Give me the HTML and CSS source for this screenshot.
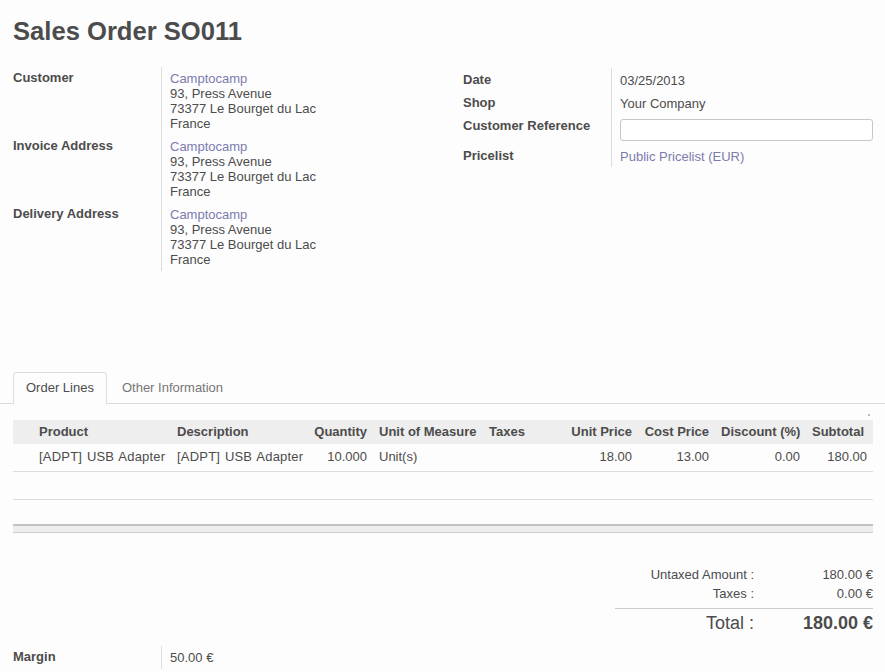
FILE: index.html
```html
<!DOCTYPE html>
<html>
<head>
<meta charset="utf-8">
<link rel="stylesheet" href="styles.css">
</head>
<body>
<div class="page">
  <div class="wrap">
    <h1 class="title">Sales Order SO011</h1>
    <div class="info">
      <div class="group">
        <div class="lbl">Customer</div>
        <div class="val"><a class="link">Camptocamp</a><br>93, Press Avenue<br>73377 Le Bourget du Lac<br>France</div>
        <div class="lbl">Invoice Address</div>
        <div class="val"><a class="link">Camptocamp</a><br>93, Press Avenue<br>73377 Le Bourget du Lac<br>France</div>
        <div class="lbl">Delivery Address</div>
        <div class="val"><a class="link">Camptocamp</a><br>93, Press Avenue<br>73377 Le Bourget du Lac<br>France</div>
      </div>
      <div class="group group-right">
        <div class="lbl">Date</div>
        <div class="val">03/25/2013</div>
        <div class="lbl">Shop</div>
        <div class="val">Your Company</div>
        <div class="lbl">Customer Reference</div>
        <div class="val val-input"><input class="field" type="text"></div>
        <div class="lbl">Pricelist</div>
        <div class="val"><a class="link">Public Pricelist (EUR)</a></div>
      </div>
    </div>
  </div>

  <div class="tabbar">
    <div class="tab active">Order Lines</div>
    <div class="tab">Other Information</div>
  </div>

  <div class="wrap">
    <div class="dotrow"><span class="dot"></span></div>
    <table class="lines">
      <colgroup>
        <col style="width:20px"><col style="width:138px"><col style="width:137px"><col style="width:65px"><col style="width:110px"><col style="width:82px"><col style="width:73px"><col style="width:77px"><col style="width:91px"><col style="width:67px">
      </colgroup>
      <thead>
        <tr>
          <th></th>
          <th>Product</th>
          <th>Description</th>
          <th class="num">Quantity</th>
          <th>Unit of Measure</th>
          <th>Taxes</th>
          <th class="num">Unit Price</th>
          <th class="num">Cost Price</th>
          <th class="num">Discount (%)</th>
          <th class="last">Subtotal</th>
        </tr>
      </thead>
      <tbody>
        <tr>
          <td></td>
          <td class="txt">[ADPT] USB Adapter</td>
          <td class="txt">[ADPT] USB Adapter</td>
          <td class="num">10.000</td>
          <td>Unit(s)</td>
          <td></td>
          <td class="num">18.00</td>
          <td class="num">13.00</td>
          <td class="num">0.00</td>
          <td class="num">180.00</td>
        </tr>
        <tr>
          <td>&nbsp;</td><td></td><td></td><td></td><td></td><td></td><td></td><td></td><td></td><td></td>
        </tr>
        <tr class="filler">
          <td></td><td></td><td></td><td></td><td></td><td></td><td></td><td></td><td></td><td></td>
        </tr>
      </tbody>
      <tfoot>
        <tr>
          <td colspan="10"></td>
        </tr>
      </tfoot>
    </table>

    <div class="totals-row">
      <table class="totals">
        <tr>
          <td class="tl">Untaxed Amount :</td>
          <td class="tv">180.00 €</td>
        </tr>
        <tr class="taxes">
          <td class="tl">Taxes :</td>
          <td class="tv">0.00 €</td>
        </tr>
        <tr class="grand">
          <td class="tl">Total :</td>
          <td class="tv strong">180.00 €</td>
        </tr>
      </table>
    </div>

    <div class="group group-margin">
      <div class="lbl">Margin</div>
      <div class="val">50.00 €</div>
    </div>
  </div>
</div>
</body>
</html>
```

FILE: styles.css
```css
html, body {
  margin: 0;
  padding: 0;
  background: #fdfdfd;
}

body {
  font-family: "Liberation Sans", Arial, sans-serif;
  font-size: 13px;
  line-height: 15px;
  color: #4c4c4c;
}

.wrap {
  padding: 0 12px 0 13px;
}

.title {
  margin: 0;
  padding-top: 16px;
  font-size: 25.6px;
  line-height: 30px;
  font-weight: bold;
  color: #4c4c4c;
}

.info {
  display: grid;
  grid-template-columns: 450px 410px;
  margin-top: 21px;
}

.group {
  display: grid;
  grid-template-columns: 148px 1fr;
  align-content: start;
}

.group-right {
  margin-top: 1px;
}

.lbl {
  font-weight: bold;
  padding: 3px 0 5px 0;
}

.val {
  border-left: 1px solid #ddd;
  padding: 4px 0 4px 8px;
}

.group-right .lbl {
  padding: 4px 0 4px 0;
}

.group-right .val {
  padding: 5px 0 3px 8px;
}

.group-right .val-input {
  padding-top: 5px;
  padding-bottom: 3px;
}

.field {
  display: block;
  box-sizing: border-box;
  width: 100%;
  height: 22px;
  margin: 0;
  border: 1px solid #c8c8c8;
  border-radius: 3px;
  background: #fff;
  font: inherit;
}

.link {
  color: #7c7bad;
  text-decoration: none;
}

.tabbar {
  display: flex;
  margin-top: 101px;
  padding-left: 13px;
  border-bottom: 1px solid #ddd;
}

.tab {
  padding: 7px 12px 8px 12px;
  border: 1px solid transparent;
  border-bottom: none;
  border-radius: 4px 4px 0 0;
  margin-right: 2px;
  margin-bottom: -1px;
  color: #777;
}

.tab.active {
  border-color: #ddd;
  background: #fdfdfd;
  color: #4c4c4c;
  height: 15px;
  padding-bottom: 9px;
}

.dotrow {
  height: 16px;
  display: flex;
  justify-content: flex-end;
  align-items: flex-start;
}

.dot {
  width: 2px;
  height: 2px;
  margin-top: 10px;
  margin-right: 3px;
  background: #bbb;
}

.lines {
  width: 860px;
  table-layout: fixed;
  border-collapse: separate;
  border-spacing: 0;
}

.lines th {
  background: #eee;
  font-weight: bold;
  text-align: left;
  padding: 4px 6px 5px 6px;
  white-space: nowrap;
}

.lines th.last {
  padding-right: 3px;
}

.lines td {
  padding: 5px 6px 7px 6px;
  border-bottom: 1px solid #ddd;
  white-space: nowrap;
}

.lines td.txt {
  word-spacing: 1px;
  letter-spacing: 0.2px;
}

.lines .num {
  text-align: right;
}

.lines tr.filler td {
  padding: 0;
  height: 24px;
  border-bottom: none;
}

.lines tfoot td {
  padding: 0;
  height: 6px;
  background: #eee;
  border-top: 2px solid #c3c3c3;
  border-bottom: 1px solid #cfcfcf;
}

.totals-row {
  display: flex;
  justify-content: flex-end;
  margin-top: 33px;
}

.totals {
  width: 258px;
  border-collapse: separate;
  border-spacing: 0;
}

.totals td {
  padding: 2px 0;
}

.totals tr:first-child td {
  padding-top: 1px;
  padding-bottom: 3px;
}

.totals .tl {
  text-align: right;
  padding-right: 6px;
  width: 139px;
}

.totals .tv {
  text-align: right;
}

.totals tr.taxes td {
  padding-top: 1px;
  padding-bottom: 7px;
}

.totals tr.grand td {
  border-top: 1px solid #ccc;
  font-size: 18px;
  line-height: 24px;
}

.totals .strong {
  font-weight: bold;
}

.group-margin {
  width: 450px;
  margin-top: 9px;
}
```
